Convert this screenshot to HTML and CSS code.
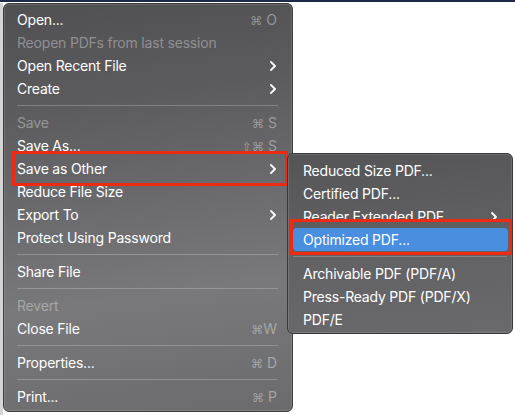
FILE: index.html
```html
<!DOCTYPE html>
<html>
<head>
<meta charset="utf-8">
<link rel="stylesheet" href="styles.css">
</head>
<body>
<div class="topbar"></div>
<div class="stage">
  <div class="menu main">
    <div class="item"><span>Open...</span><span class="sc"><span class="cmd">⌘</span> O</span></div>
    <div class="item dis"><span>Reopen PDFs from last session</span></div>
    <div class="item"><span>Open Recent File</span><svg class="chev" viewBox="0 0 6 10"><polyline points="1,1 5,5 1,9"/></svg></div>
    <div class="item"><span>Create</span><svg class="chev" viewBox="0 0 6 10"><polyline points="1,1 5,5 1,9"/></svg></div>
    <div class="sep"></div>
    <div class="item dis"><span>Save</span><span class="sc"><span class="cmd">⌘</span> S</span></div>
    <div class="item"><span>Save As...</span><span class="sc"><span class="cmd">⇧⌘</span> S</span></div>
    <div class="item"><span>Save as Other</span><svg class="chev" viewBox="0 0 6 10"><polyline points="1,1 5,5 1,9"/></svg></div>
    <div class="item"><span>Reduce File Size</span></div>
    <div class="item"><span>Export To</span><svg class="chev" viewBox="0 0 6 10"><polyline points="1,1 5,5 1,9"/></svg></div>
    <div class="item"><span>Protect Using Password</span></div>
    <div class="sep"></div>
    <div class="item"><span>Share File</span></div>
    <div class="sep"></div>
    <div class="item dis"><span>Revert</span></div>
    <div class="item"><span>Close File</span><span class="sc"><span class="cmd">⌘</span>W</span></div>
    <div class="sep"></div>
    <div class="item"><span>Properties...</span><span class="sc"><span class="cmd">⌘</span> D</span></div>
    <div class="sep"></div>
    <div class="item"><span>Print...</span><span class="sc"><span class="cmd">⌘</span> P</span></div>
  </div>
  <div class="mark mark-main"></div>
  <div class="menu sub">
    <div class="item"><span>Reduced Size PDF...</span></div>
    <div class="item"><span>Certified PDF...</span></div>
    <div class="item"><span>Reader Extended PDF</span><svg class="chev" viewBox="0 0 6 10"><polyline points="1,1 5,5 1,9"/></svg></div>
    <div class="item hl"><span>Optimized PDF...</span></div>
    <div class="sep"></div>
    <div class="item"><span>Archivable PDF (PDF/A)</span></div>
    <div class="item"><span>Press-Ready PDF (PDF/X)</span></div>
    <div class="item"><span>PDF/E</span></div>
  </div>
  <div class="mark mark-sub"></div>
</div>
</body>
</html>
```

FILE: styles.css
```css
* { box-sizing: border-box; }
html, body {
  margin: 0;
  padding: 0;
  background: #ffffff;
  width: 515px;
  height: 415px;
  overflow: hidden;
  font-family: Inter, "Liberation Sans", sans-serif;
}
.topbar {
  height: 2px;
  background: #1c2b4c;
}
.stage {
  position: relative;
  height: 413px;
  border-left: 3px solid #d4d4d4;
}
.menu {
  border-radius: 6px;
  color: #ffffff;
  font-size: 14px;
  letter-spacing: -0.2px;
}
.main {
  margin-top: 1px;
  width: 290px;
  height: 409px;
  padding: 4px 0 4px;
  background: linear-gradient(172deg, #505053 0%, #5c5c5f 25%, #6f6f72 55%, #79797b 70%, #6b6b6d 100%);
  border: 1px solid #3e3e40;
  box-shadow: inset 0 0 0 1px rgba(255,255,255,0.12);
}
.item {
  height: 23px;
  display: flex;
  align-items: center;
  justify-content: space-between;
  padding: 0 15px 0 13px;
  white-space: nowrap;
}
.sub .item {
  padding: 0 14px 0 15px;
}
.dis { color: rgba(255,255,255,0.35); }
.sc {
  color: rgba(255,255,255,0.38);
  font-size: 14px;
  letter-spacing: 0;
}
.cmd {
  font-family: "DejaVu Sans", sans-serif;
  font-size: 12px;
}
.chev {
  width: 6px;
  height: 10px;
  margin-right: 1px;
  fill: none;
  stroke: #ffffff;
  stroke-width: 1.8;
  stroke-linecap: round;
  stroke-linejoin: round;
}
.sep {
  height: 11px;
  display: flex;
  align-items: center;
  padding: 0 14px 0 13px;
}
.sep::before {
  content: "";
  display: block;
  flex: 1;
  height: 1px;
  background: rgba(255,255,255,0.22);
}
.sub {
  position: absolute;
  left: 284px;
  top: 150px;
  width: 226px;
  height: 181px;
  padding: 5px 0 4px;
  background: linear-gradient(175deg, #555558 0%, #5f5f62 40%, #6a6a6c 100%);
  border: 1px solid #38383a;
  box-shadow: inset 0 0 0 1px rgba(255,255,255,0.12);
}
.sub .sep { padding: 0 5px; }
.sub .hl {
  margin: 0 4px 0 5px;
  padding-left: 10px;
  border-radius: 4px;
  background: #4a8ee0;
}
.mark {
  position: absolute;
  border: 3px solid #ee2a12;
}
.mark-main {
  left: 9px;
  top: 148px;
  width: 276px;
  height: 35px;
}
.mark-sub {
  left: 287px;
  top: 216px;
  width: 222px;
  height: 36px;
}
```
